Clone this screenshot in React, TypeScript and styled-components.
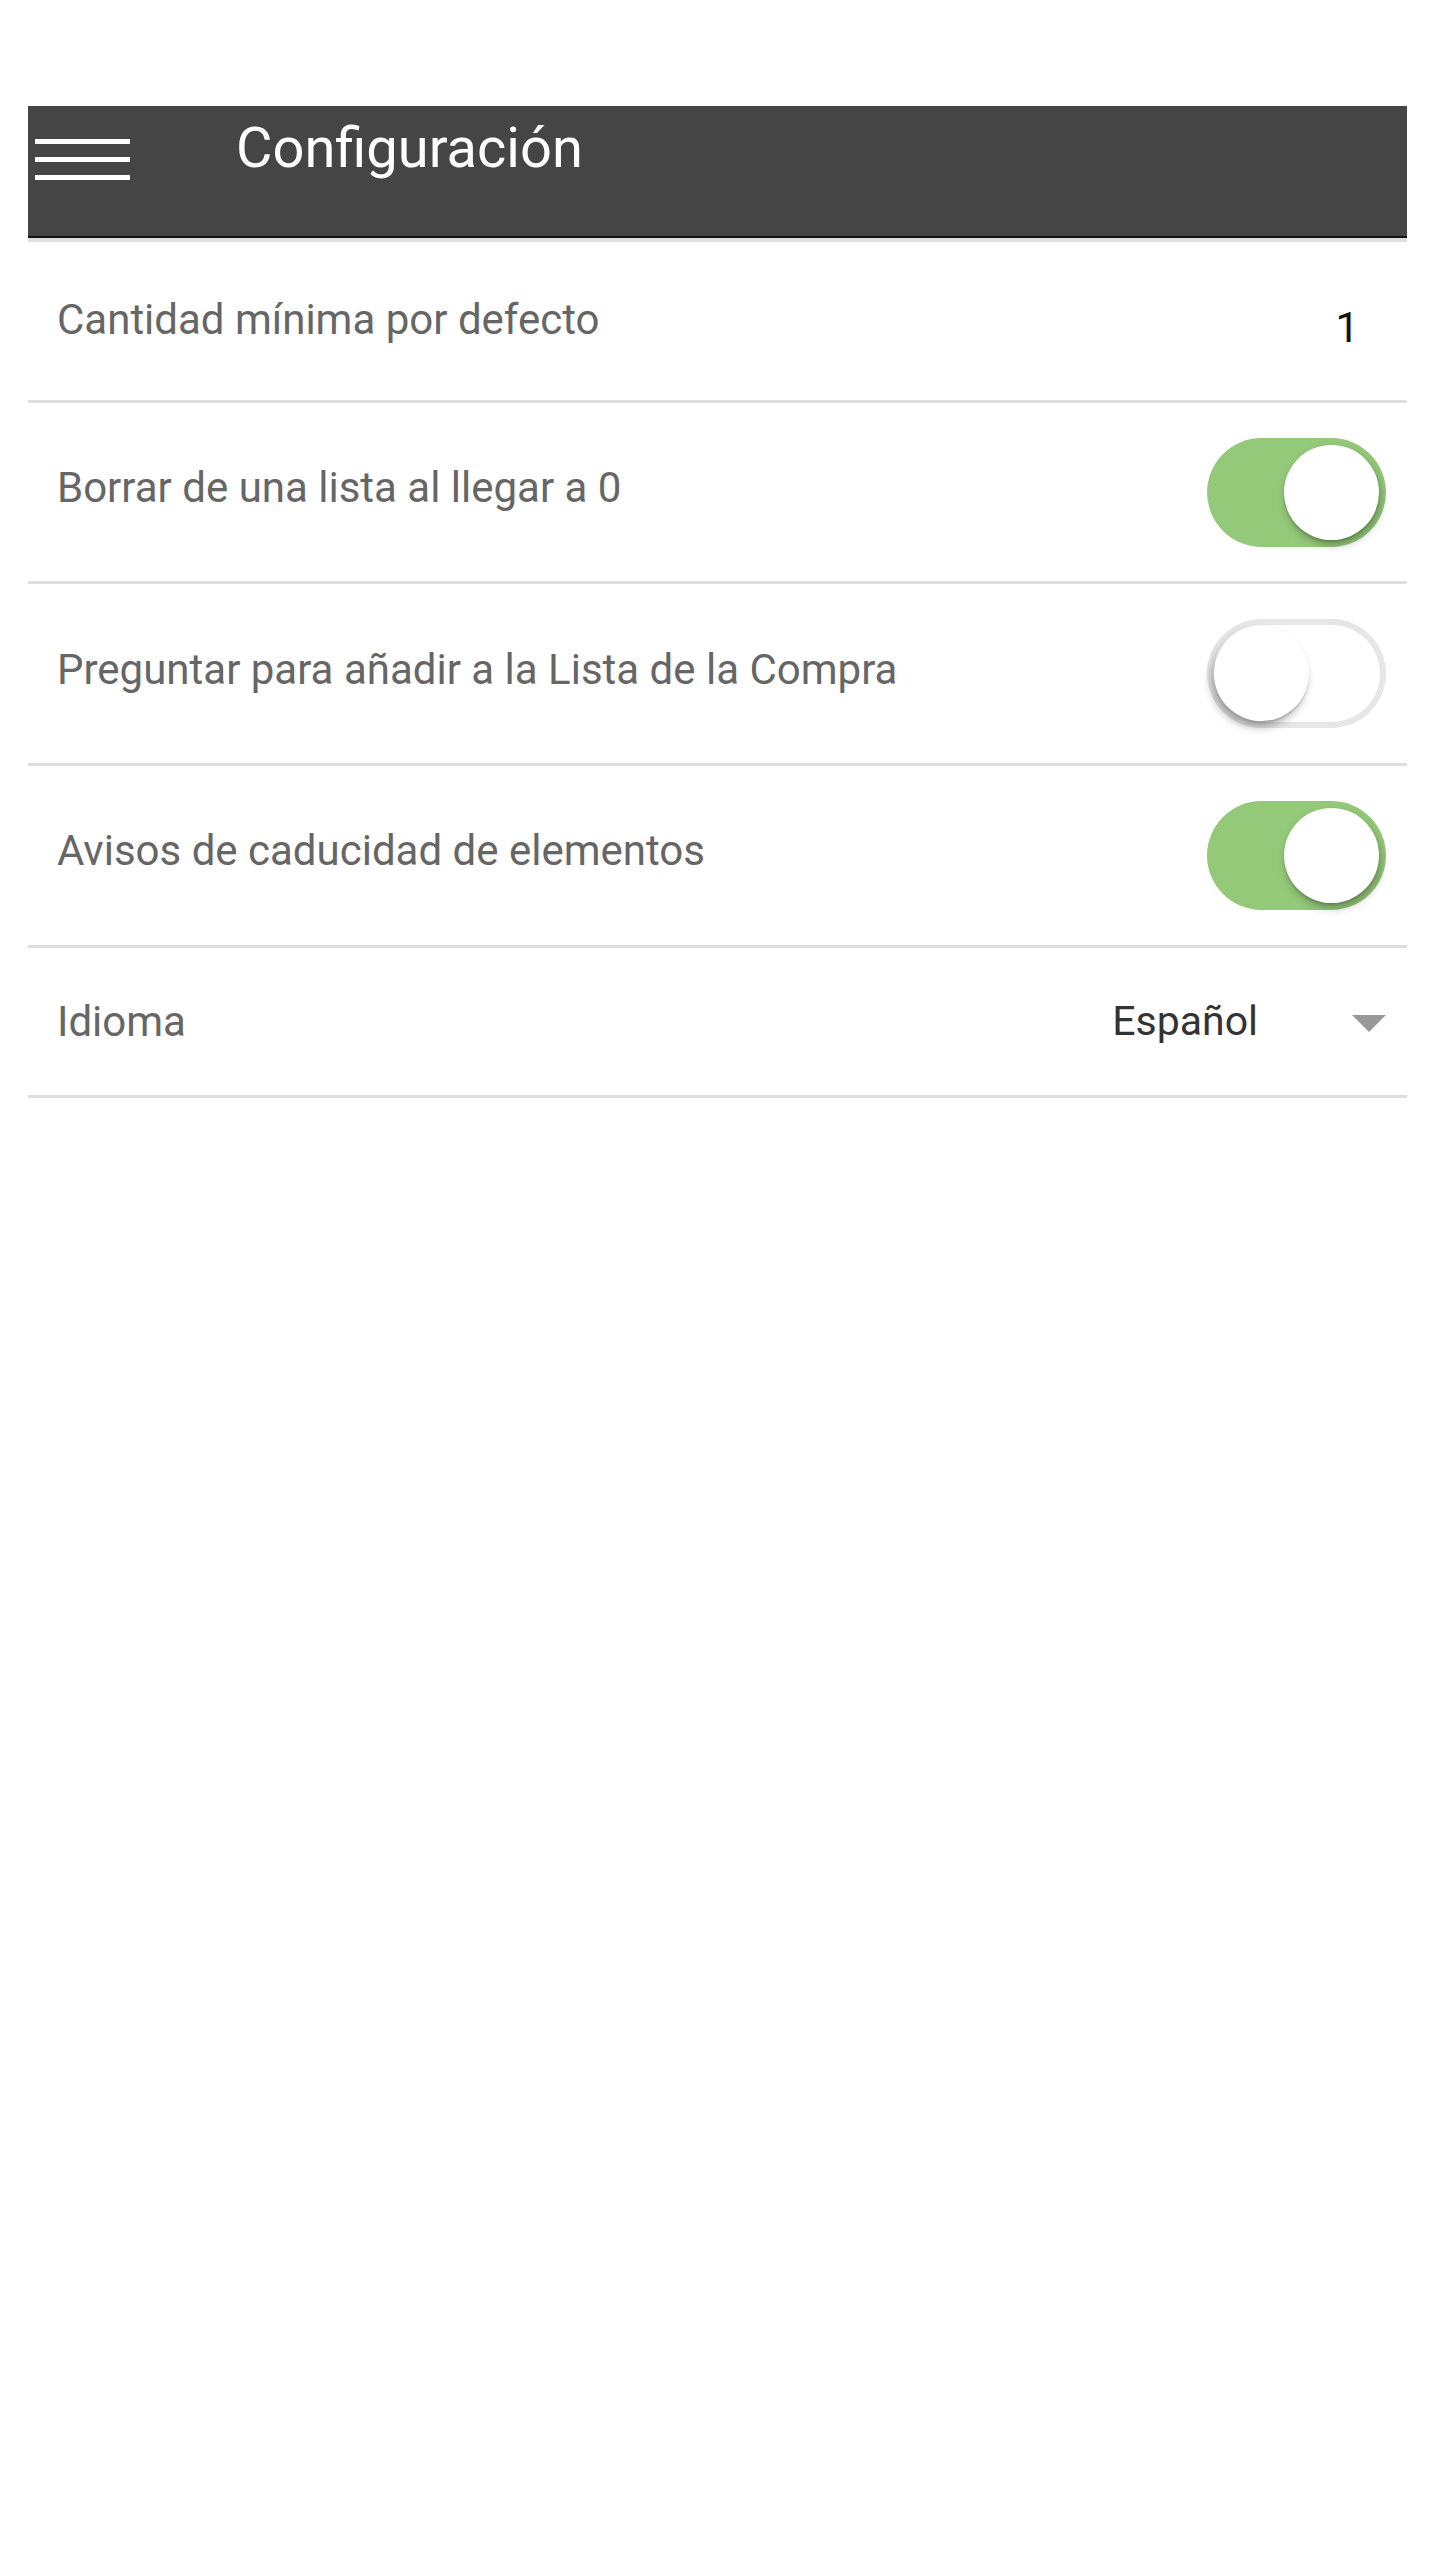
import React from "react";
import styled, { createGlobalStyle } from "styled-components";

const GlobalStyle = createGlobalStyle`
  html, body {
    margin: 0;
    padding: 0;
    background: #ffffff;
    font-family: Roboto, "Noto Sans", "Liberation Sans", sans-serif;
  }
  * { box-sizing: border-box; }
`;

const Page = styled.div`
  padding: 106px 33px 0 28px;
  min-height: 2560px;
  background: #ffffff;
`;

const Header = styled.header`
  display: flex;
  align-items: flex-start;
  height: 132px;
  background: #454545;
  border-bottom: 2px solid #141414;
  box-shadow: 0 4px 0 #dfdfdf;
  margin-bottom: 4px;
`;

const MenuButton = styled.div`
  display: flex;
  flex-direction: column;
  gap: 13px;
  width: 95px;
  margin: 33px 0 0 7px;
`;

const MenuBar = styled.span`
  display: block;
  height: 5px;
  background: #ffffff;
`;

const Title = styled.h1`
  margin: 14px 0 0 106px;
  font-size: 56px;
  line-height: 1;
  font-weight: 400;
  color: #ffffff;
`;

const List = styled.div`
  display: flex;
  flex-direction: column;
`;

const Row = styled.div<{ $h: number }>`
  display: flex;
  align-items: center;
  justify-content: space-between;
  min-height: ${(p) => p.$h}px;
  padding: 0 21px 0 29px;
  border-bottom: 3px solid #dedede;
`;

const Label = styled.span<{ $lift?: number }>`
  font-size: 42px;
  line-height: 1;
  color: #666666;
  margin-bottom: ${(p) => p.$lift ?? 0}px;
`;

const Value = styled.span`
  font-size: 42px;
  line-height: 1;
  color: #111111;
  margin: 14px 27px 0 0;
`;

const Track = styled.div<{ $on: boolean }>`
  position: relative;
  width: 179px;
  height: 109px;
  border-radius: 55px;
  background: ${(p) => (p.$on ? "#94c979" : "#ffffff")};
  box-shadow: ${(p) => (p.$on ? "none" : "inset 0 0 0 6px #e6e6e6")};
  flex-shrink: 0;
`;

const Knob = styled.span<{ $on: boolean }>`
  position: absolute;
  top: 7px;
  ${(p) => (p.$on ? "right: 7px;" : "left: 7px;")}
  width: 95px;
  height: 95px;
  border-radius: 50%;
  background: #ffffff;
  box-shadow: ${(p) =>
    p.$on
      ? "2px 5px 9px rgba(0, 0, 0, 0.28), 0 2px 2px rgba(0, 0, 0, 0.12)"
      : "-3px 6px 9px rgba(0, 0, 0, 0.3), 0 2px 2px rgba(0, 0, 0, 0.12)"};
`;

const Select = styled.div`
  display: flex;
  align-items: center;
  gap: 94px;
`;

const SelectText = styled.span`
  font-size: 41px;
  line-height: 1;
  color: #333333;
`;

const Arrow = styled.span`
  width: 0;
  height: 0;
  border-left: 17px solid transparent;
  border-right: 17px solid transparent;
  border-top: 17px solid #999999;
  margin-top: 4px;
`;

const Toggle = ({ on }: { on: boolean }) => (
  <Track $on={on}>
    <Knob $on={on} />
  </Track>
);

export default function App() {
  return (
    <>
      <GlobalStyle />
      <Page>
        <Header>
          <MenuButton>
            <MenuBar />
            <MenuBar />
            <MenuBar />
          </MenuButton>
          <Title>Configuración</Title>
        </Header>
        <List>
          <Row $h={161}>
            <Label $lift={3}>Cantidad mínima por defecto</Label>
            <Value>1</Value>
          </Row>
          <Row $h={181}>
            <Label $lift={9}>Borrar de una lista al llegar a 0</Label>
            <Toggle on={true} />
          </Row>
          <Row $h={182}>
            <Label $lift={8}>Preguntar para añadir a la Lista de la Compra</Label>
            <Toggle on={false} />
          </Row>
          <Row $h={182}>
            <Label $lift={9}>Avisos de caducidad de elementos</Label>
            <Toggle on={true} />
          </Row>
          <Row $h={150}>
            <Label>Idioma</Label>
            <Select>
              <SelectText>Español</SelectText>
              <Arrow />
            </Select>
          </Row>
        </List>
      </Page>
    </>
  );
}
